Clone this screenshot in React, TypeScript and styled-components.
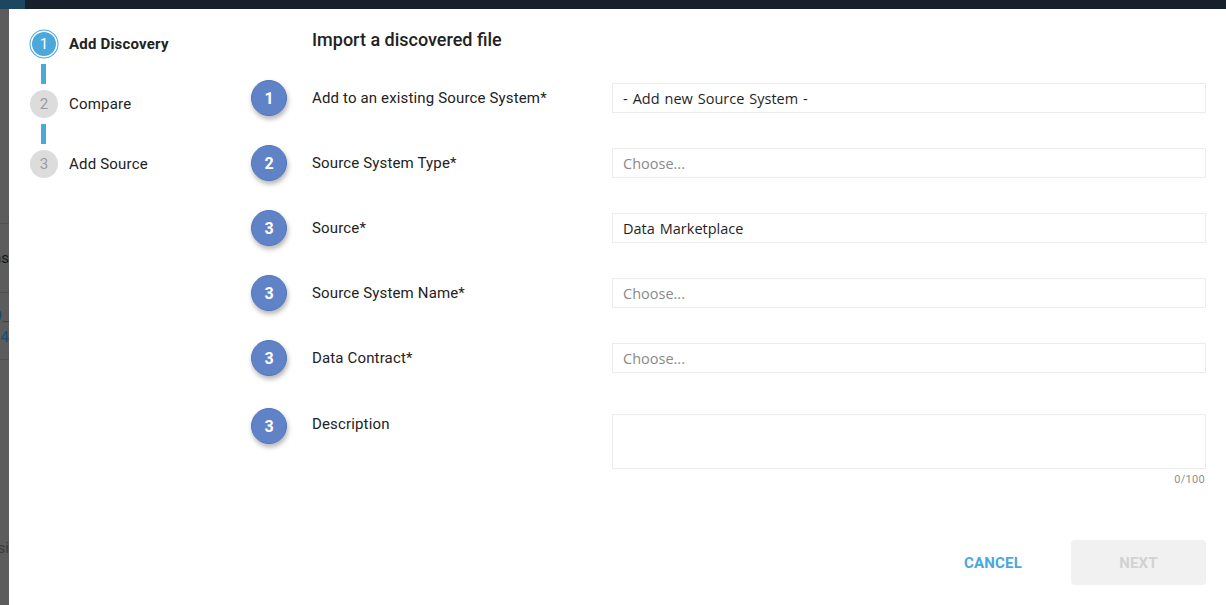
import React from "react";
import styled, { createGlobalStyle } from "styled-components";

const Global = createGlobalStyle`
  html, body { margin: 0; padding: 0; background: #5c5c5c; }
  body { font-family: Roboto, "Liberation Sans", sans-serif; overflow: hidden; }
  * { box-sizing: border-box; }
`;

const Page = styled.div`
  width: 1226px;
  height: 605px;
  display: flex;
  flex-direction: column;
  overflow: hidden;
`;

const TopBar = styled.div`
  height: 9px;
  flex: none;
  display: flex;
  background: #18202b;
`;

const TopBarBrand = styled.div`
  width: 25px;
  background: #1d4660;
`;

const Body = styled.div`
  flex: 1;
  display: flex;
  min-height: 0;
`;

const Backdrop = styled.div`
  width: 9px;
  flex: none;
  overflow: hidden;
  background: #5c5c5c;
  display: flex;
  flex-direction: column;
`;

const BgBlock = styled.div<{ $h: number; $line?: boolean }>`
  height: ${(p) => p.$h}px;
  flex: none;
  border-bottom: ${(p) => (p.$line ? "1px solid #525252" : "none")};
  display: flex;
  flex-direction: column;
  justify-content: center;
  gap: 5px;
`;

const BgText = styled.div<{ $color: string }>`
  display: flex;
  justify-content: flex-end;
  white-space: nowrap;
  font-size: 15px;
  line-height: 16px;
  color: ${(p) => p.$color};
`;

const Modal = styled.div`
  flex: 1;
  background: #ffffff;
  display: flex;
  padding: 21px 20px 0 21px;
`;

const Sidebar = styled.nav`
  width: 221px;
  flex: none;
  display: flex;
  flex-direction: column;
`;

const Step = styled.div`
  display: flex;
  align-items: center;
  gap: 11px;
`;

const StepDot = styled.div<{ $active?: boolean }>`
  width: ${(p) => (p.$active ? 24 : 28)}px;
  height: ${(p) => (p.$active ? 24 : 28)}px;
  margin: ${(p) => (p.$active ? "2px" : "0")};
  border-radius: 50%;
  display: flex;
  align-items: center;
  justify-content: center;
  font-size: 15px;
  background: ${(p) => (p.$active ? "#4aa8dc" : "#dcdcdc")};
  color: ${(p) => (p.$active ? "#ffffff" : "#9b9b9b")};
  box-shadow: ${(p) => (p.$active ? "0 0 0 1.5px #ffffff, 0 0 0 2.5px #4aa8dc" : "none")};
`;

const StepLabel = styled.span<{ $active?: boolean }>`
  font-size: 15px;
  letter-spacing: 0.2px;
  font-weight: ${(p) => (p.$active ? 700 : 400)};
  color: #222222;
`;

const Connector = styled.div`
  width: 5px;
  height: 20px;
  margin: 6px 0 6px 11px;
  background: #4aa8dc;
`;

const Main = styled.main`
  flex: 1;
  display: flex;
  flex-direction: column;
`;

const Title = styled.h2`
  margin: -2px 0 28px 61px;
  font-size: 18px;
  line-height: 24px;
  font-weight: 500;
  color: #222222;
`;

const Rows = styled.div`
  display: flex;
  flex-direction: column;
  gap: 29px;
`;

const Row = styled.div<{ $top?: boolean }>`
  display: grid;
  grid-template-columns: 61px 300px 1fr;
  align-items: ${(p) => (p.$top ? "start" : "center")};
  margin-top: ${(p) => (p.$top ? 3 : 0)}px;
`;

const Num = styled.div`
  width: 36px;
  height: 36px;
  border-radius: 50%;
  background: #6083c8;
  border: 1px solid #5376bf;
  box-shadow: 1px 3px 5px rgba(0, 0, 0, 0.3);
  color: #ffffff;
  font-weight: 700;
  font-size: 16px;
  display: flex;
  align-items: center;
  justify-content: center;
`;

const Label = styled.label<{ $top?: boolean }>`
  font-size: 15px;
  line-height: 20px;
  letter-spacing: 0.15px;
  color: #222222;
  padding-top: ${(p) => (p.$top ? 6 : 0)}px;
`;

const Field = styled.input`
  height: 30px;
  width: 100%;
  border: 1px solid #ececec;
  padding: 0 10px;
  font-family: "Open Sans", "Liberation Sans", sans-serif;
  font-size: 14.5px;
  word-spacing: 1.2px;
  color: #1f1f1f;
  outline: none;
  &::placeholder { color: #8a8a8a; }
`;

const AreaWrap = styled.div`
  display: flex;
  flex-direction: column;
  align-items: flex-end;
  margin-top: 6px;
`;

const Area = styled.textarea`
  width: 100%;
  height: 55px;
  border: 1px solid #ececec;
  resize: none;
  outline: none;
  padding: 8px 10px;
  font-family: "Open Sans", "Liberation Sans", sans-serif;
  font-size: 14px;
`;

const Counter = styled.span`
  margin-top: 4px;
  margin-right: 1px;
  font-size: 11px;
  line-height: 13px;
  letter-spacing: 0.3px;
  color: #8f8f8f;
`;

const Footer = styled.div`
  margin-top: 54px;
  display: flex;
  justify-content: flex-end;
  align-items: center;
  gap: 33px;
`;

const Button = styled.button<{ $primary?: boolean }>`
  height: 45px;
  width: ${(p) => (p.$primary ? 135 : 90)}px;
  border: none;
  border-radius: 4px;
  font-family: Roboto, "Liberation Sans", sans-serif;
  font-size: 15px;
  font-weight: 700;
  letter-spacing: 0.2px;
  background: ${(p) => (p.$primary ? "#f1f1f1" : "transparent")};
  color: ${(p) => (p.$primary ? "#d2d2d2" : "#4aa8dc")};
`;

const steps = [
  { n: 1, label: "Add Discovery", active: true },
  { n: 2, label: "Compare" },
  { n: 3, label: "Add Source" },
];

const fields: { n: number; label: string; value?: string; placeholder?: string }[] = [
  { n: 1, label: "Add to an existing Source System*", value: "- Add new Source System -" },
  { n: 2, label: "Source System Type*", placeholder: "Choose..." },
  { n: 3, label: "Source*", value: "Data Marketplace" },
  { n: 3, label: "Source System Name*", placeholder: "Choose..." },
  { n: 3, label: "Data Contract*", placeholder: "Choose..." },
];

export default function App() {
  return (
    <Page>
      <Global />
      <TopBar>
        <TopBarBrand />
      </TopBar>
      <Body>
        <Backdrop>
          <BgBlock $h={215} $line />
          <BgBlock $h={69} $line>
            <BgText $color="#151515">Systems</BgText>
          </BgBlock>
          <BgBlock $h={67} $line>
            <BgText $color="#1b4a70">file_2019_</BgText>
            <BgText $color="#1b4a70">10:4</BgText>
          </BgBlock>
          <BgBlock $h={196}>
            <BgText $color="#3a3a3a" style={{ marginTop: 180 }}>Versi</BgText>
          </BgBlock>
        </Backdrop>
        <Modal>
          <Sidebar>
            {steps.map((s, i) => (
              <React.Fragment key={s.n}>
                {i > 0 && <Connector />}
                <Step>
                  <StepDot $active={s.active}>{s.n}</StepDot>
                  <StepLabel $active={s.active}>{s.label}</StepLabel>
                </Step>
              </React.Fragment>
            ))}
          </Sidebar>
          <Main>
            <Title>Import a discovered file</Title>
            <Rows>
              {fields.map((f, i) => (
                <Row key={i}>
                  <Num>{f.n}</Num>
                  <Label>{f.label}</Label>
                  <Field readOnly value={f.value ?? ""} placeholder={f.placeholder} />
                </Row>
              ))}
              <Row $top>
                <Num>3</Num>
                <Label $top>Description</Label>
                <AreaWrap>
                  <Area />
                  <Counter>0/100</Counter>
                </AreaWrap>
              </Row>
            </Rows>
            <Footer>
              <Button>CANCEL</Button>
              <Button $primary>NEXT</Button>
            </Footer>
          </Main>
        </Modal>
      </Body>
    </Page>
  );
}
